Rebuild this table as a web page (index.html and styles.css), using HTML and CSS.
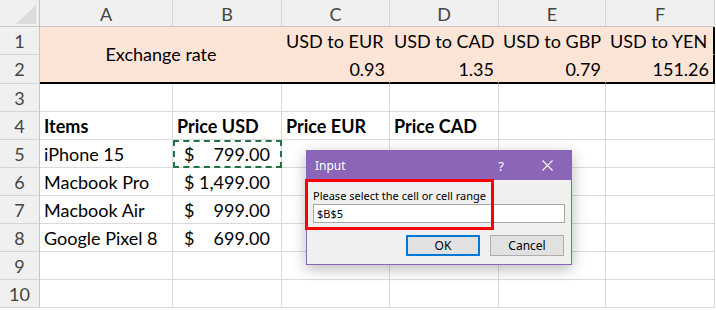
FILE: index.html
```html
<!DOCTYPE html>
<html>
<head>
<meta charset="utf-8">
<link rel="stylesheet" href="styles.css">
</head>
<body>
<div class="sheet">
  <div class="corner"><svg width="40" height="27" viewBox="0 0 40 27"><polygon points="36,5 36,24 16,24" fill="#dcdcdc"/></svg></div>
  <div class="ch">A</div><div class="ch">B</div><div class="ch">C</div><div class="ch">D</div><div class="ch">E</div><div class="ch ch-last">F</div>

  <div class="rh">1</div>
  <div class="cell merged">Exchange rate</div>
  <div class="cell fill">USD to EUR</div><div class="cell fill">USD to CAD</div><div class="cell fill">USD to GBP</div><div class="cell fill fill-right">USD to YEN</div>

  <div class="rh rh2">2</div>
  <div class="cell fill fill-bottom num">0.93</div><div class="cell fill fill-bottom num">1.35</div><div class="cell fill fill-bottom num">0.79</div><div class="cell fill fill-bottom fill-right num">151.26</div>

  <div class="rh">3</div>
  <div class="cell"></div><div class="cell"></div><div class="cell"></div><div class="cell"></div><div class="cell"></div><div class="cell"></div>

  <div class="rh">4</div>
  <div class="cell bold">Items</div><div class="cell bold">Price USD</div><div class="cell bold">Price EUR</div><div class="cell bold">Price CAD</div><div class="cell"></div><div class="cell"></div>

  <div class="rh">5</div>
  <div class="cell">iPhone 15</div><div class="cell cur copy"><span>$</span><span>799.00</span></div><div class="cell"></div><div class="cell"></div><div class="cell"></div><div class="cell"></div>

  <div class="rh">6</div>
  <div class="cell">Macbook Pro</div><div class="cell cur"><span>$</span><span>1,499.00</span></div><div class="cell"></div><div class="cell"></div><div class="cell"></div><div class="cell"></div>

  <div class="rh">7</div>
  <div class="cell">Macbook Air</div><div class="cell cur"><span>$</span><span>999.00</span></div><div class="cell"></div><div class="cell"></div><div class="cell"></div><div class="cell"></div>

  <div class="rh">8</div>
  <div class="cell">Google Pixel 8</div><div class="cell cur"><span>$</span><span>699.00</span></div><div class="cell"></div><div class="cell"></div><div class="cell"></div><div class="cell"></div>

  <div class="rh">9</div>
  <div class="cell"></div><div class="cell"></div><div class="cell"></div><div class="cell"></div><div class="cell"></div><div class="cell"></div>

  <div class="rh">10</div>
  <div class="cell"></div><div class="cell"></div><div class="cell"></div><div class="cell"></div><div class="cell"></div><div class="cell"></div>
</div>

<div class="dialog">
  <div class="titlebar">
    <span class="title">Input</span>
    <span class="help">?</span>
    <svg class="close" width="11" height="11" viewBox="0 0 11 11"><path d="M0.5 0.5 L10.5 10.5 M10.5 0.5 L0.5 10.5" stroke="#fff" stroke-width="1.1" fill="none"/></svg>
  </div>
  <div class="dbody">
    <div class="label">Please select the cell or cell range</div>
    <div class="input">$B$5</div>
    <div class="buttons">
      <div class="btn btn-ok">OK</div>
      <div class="btn">Cancel</div>
    </div>
  </div>
</div>
<div class="highlight"></div>
</body>
</html>
```
FILE: styles.css
```css
html, body {
  margin: 0;
  padding: 0;
  background: #fff;
}
body {
  width: 716px;
  height: 310px;
  overflow: hidden;
  position: relative;
  font-family: "Lato", "Liberation Sans", sans-serif;
}
.sheet {
  display: grid;
  grid-template-columns: 40px 133px 109px 108px 109px 107px 109px;
  grid-template-rows: 27px 28px 29px 28px 28px 28px 28px 28px 28px 28px 28px;
  font-size: 18px;
  color: #000;
}
.corner {
  background: #f0f0f0;
  border-right: 1px solid #c6c6c6;
  border-bottom: 1px solid #c6c6c6;
  box-sizing: border-box;
  overflow: hidden;
}
.corner svg { display: block; }
.ch {
  background: #f0f0f0;
  border-right: 1px solid #d6d6d6;
  border-bottom: 1px solid #c6c6c6;
  box-sizing: border-box;
  display: flex;
  align-items: center;
  justify-content: center;
  color: #444;
  padding-top: 1px;
}
.rh {
  background: #f0f0f0;
  border-right: 1px solid #c6c6c6;
  border-bottom: 1px solid #d6d6d6;
  box-sizing: border-box;
  display: flex;
  align-items: flex-end;
  justify-content: center;
  color: #444;
  padding-bottom: 2px;
}
.rh2 { padding-bottom: 3px; }
.cell {
  border-right: 1px solid #dadada;
  border-bottom: 1px solid #dadada;
  box-sizing: border-box;
  display: flex;
  align-items: flex-end;
  padding: 0 4px 2px 4px;
  white-space: nowrap;
  overflow: visible;
}
.merged {
  grid-column: 2 / 4;
  grid-row: 2 / 4;
  background: #fce4d6;
  border-right: none;
  border-bottom: 2px solid #000;
  align-items: center;
  justify-content: center;
  padding: 0 0 1px 0;
}
.fill {
  background: #fce4d6;
  border-right-color: #fce4d6;
  border-bottom-color: #fce4d6;
}
.fill-bottom {
  border-bottom: 2px solid #000;
}
.fill-right {
  border-right: 2px solid #000;
}
.num { justify-content: flex-end; }
.bold { font-weight: 700; }
.cur {
  justify-content: space-between;
  padding-left: 11px;
  padding-right: 11px;
}
.copy {
  outline: 2px dashed #217346;
  outline-offset: -2px;
}

.dialog {
  position: absolute;
  left: 306px;
  top: 150px;
  width: 266px;
  height: 115px;
  box-sizing: border-box;
  border: 1px solid #8a65b8;
  background: #f0f0f0;
  box-shadow: 0 4px 14px rgba(0,0,0,0.28);
  font-family: "Noto Sans", "Open Sans", sans-serif;
  font-size: 11px;
  color: #000;
}
.titlebar {
  height: 29px;
  background: #8a65b8;
  color: #fff;
  display: flex;
  align-items: center;
  padding-left: 8px;
  padding-right: 18px;
}
.title { flex: 1; font-size: 12px; }
.help { font-size: 13px; margin-right: 38px; }
.close { display: block; }
.dbody {
  padding: 7px 6px 0 6px;
  display: flex;
  flex-direction: column;
}
.label {
  height: 17px;
  line-height: 17px;
  font-size: 11px;
}
.input {
  height: 19px;
  box-sizing: border-box;
  background: #fff;
  border: 1px solid #a8a8a8;
  padding-left: 3px;
  line-height: 17px;
  font-size: 11px;
}
.buttons {
  display: flex;
  justify-content: flex-end;
  gap: 10px;
  margin-top: 12px;
  padding-right: 1px;
}
.btn {
  width: 74px;
  height: 21px;
  box-sizing: border-box;
  border: 1px solid #adadad;
  background: #e1e1e1;
  display: flex;
  align-items: center;
  justify-content: center;
  font-size: 12px;
}
.btn-ok {
  border: 2px solid #0078d7;
}
.highlight {
  position: absolute;
  left: 305px;
  top: 179px;
  width: 189px;
  height: 51px;
  box-sizing: border-box;
  border: 3px solid #ff0000;
}
```
